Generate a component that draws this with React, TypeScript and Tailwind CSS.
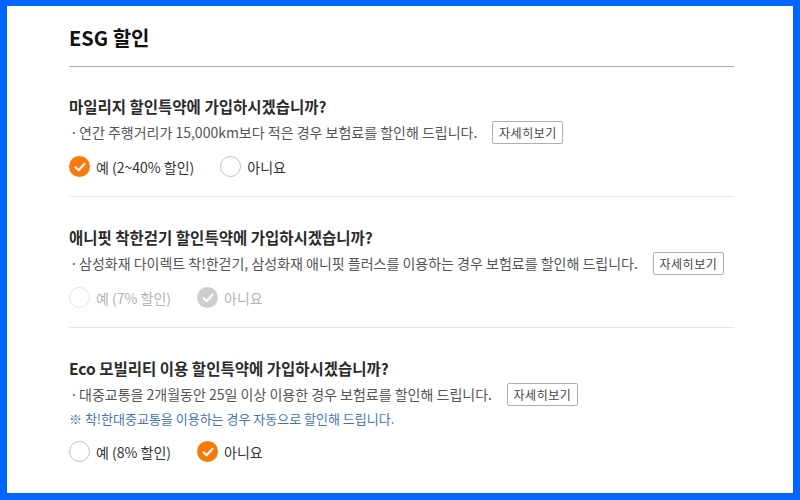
import React from "react";

type Option = { label: string };

interface Discount {
  question: string;
  desc: string;
  note?: string;
  options: Option[];
  selected: number;
  disabled?: boolean;
}

const discounts: Discount[] = [
  {
    question: "마일리지 할인특약에 가입하시겠습니까?",
    desc: "연간 주행거리가 15,000km보다 적은 경우 보험료를 할인해 드립니다.",
    options: [{ label: "예 (2~40% 할인)" }, { label: "아니요" }],
    selected: 0,
  },
  {
    question: "애니핏 착한걷기 할인특약에 가입하시겠습니까?",
    desc: "삼성화재 다이렉트 착!한걷기, 삼성화재 애니핏 플러스를 이용하는 경우 보험료를 할인해 드립니다.",
    options: [{ label: "예 (7% 할인)" }, { label: "아니요" }],
    selected: 1,
    disabled: true,
  },
  {
    question: "Eco 모빌리티 이용 할인특약에 가입하시겠습니까?",
    desc: "대중교통을 2개월동안 25일 이상 이용한 경우 보험료를 할인해 드립니다.",
    note: "※ 착!한대중교통을 이용하는 경우 자동으로 할인해 드립니다.",
    options: [{ label: "예 (8% 할인)" }, { label: "아니요" }],
    selected: 1,
  },
];

const RadioMark = ({ checked, disabled }: { checked: boolean; disabled?: boolean }) => {
  if (checked) {
    return (
      <span
        className={`flex h-[21px] w-[21px] items-center justify-center rounded-full ${
          disabled ? "bg-[#cbcdd1]" : "bg-[#f97a0c]"
        }`}
      >
        <svg width="12" height="10" viewBox="0 0 12 10" fill="none">
          <path d="M1.5 5.2 4.6 8.2 10.5 1.8" stroke="#fff" strokeWidth="2" strokeLinecap="round" strokeLinejoin="round" />
        </svg>
      </span>
    );
  }
  return (
    <span
      className={`h-[21px] w-[21px] rounded-full border-[1.5px] bg-white ${
        disabled ? "border-[#e1e4e9]" : "border-[#b9c0ca]"
      }`}
    />
  );
};

const DiscountRow = ({ item, first }: { item: Discount; first?: boolean }) => (
  <div className={`${first ? "pt-[29px]" : "pt-[30px] border-t border-[#e3e8ef]"} pb-[19px]`}>
    <p className="text-[15.5px] font-semibold leading-[20px] text-[#2b2b2b]">{item.question}</p>
    <div className="mt-[4px] flex items-center text-[14px] leading-[24px] text-[#555]">
      <span className="w-[10px] pl-[1px]">·</span>
      <span>{item.desc}</span>
      <button className="ml-[15px] h-[23px] w-[71px] rounded-[2px] border border-[#a9b0ba] bg-white text-[12px] leading-[21px] text-[#444] tracking-[0.5px]">
        자세히보기
      </button>
    </div>
    {item.note && (
      <p className="mt-[3px] text-[13px] leading-[20px] text-[#4673b3]">{item.note}</p>
    )}
    <div className="mt-[12px] flex items-center gap-[26px]">
      {item.options.map((opt, i) => (
        <label key={i} className="flex items-center gap-[6px]">
          <RadioMark checked={item.selected === i} disabled={item.disabled} />
          <span className={`text-[14px] leading-[20px] ${item.disabled ? "text-[#b3b3b3]" : "text-[#333]"}`}>
            {opt.label}
          </span>
        </label>
      ))}
    </div>
  </div>
);

export default function App() {
  return (
    <div
      className="h-[500px] w-[800px] overflow-hidden border-[7px] border-t-[6px] border-[#0066ff] bg-white"
      style={{ fontFamily: '"Noto Sans CJK KR", "Noto Sans", sans-serif' }}
    >
      <div className="pl-[62px] pr-[59px]">
        <div className="border-b border-[#a4aebb] pt-[18px] pb-[14px]">
          <h2 className="text-[20px] font-bold leading-[28px] text-[#111]">ESG 할인</h2>
        </div>
        {discounts.map((d, i) => (
          <DiscountRow key={i} item={d} first={i === 0} />
        ))}
      </div>
    </div>
  );
}
